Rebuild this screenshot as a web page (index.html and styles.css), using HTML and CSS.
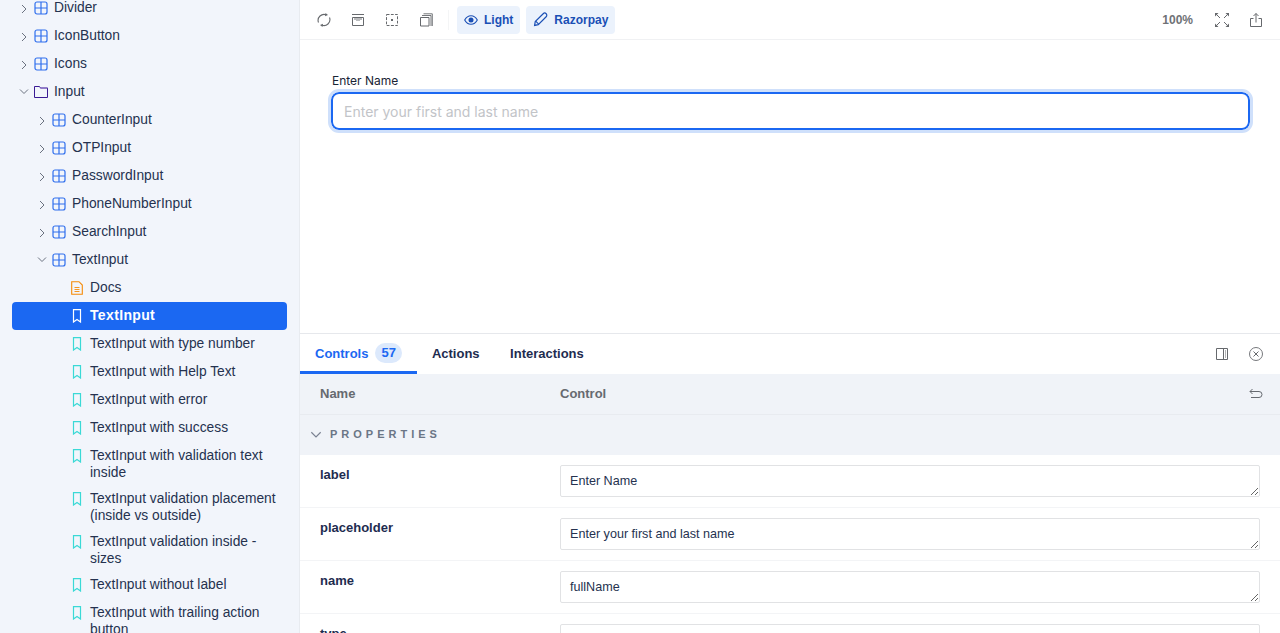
FILE: index.html
```html
<!DOCTYPE html>
<html lang="en">
<head>
    <meta charset="UTF-8">
    <meta name="viewport" content="width=device-width, initial-scale=1.0">
    <title>TextInput - Storybook</title>
    <link rel="stylesheet" href="styles.css">
</head>
<body>
<svg class="defs" width="0" height="0" aria-hidden="true">
    <symbol id="i-component" viewBox="0 0 14 14"><rect x="1" y="1" width="12" height="12" rx="2" fill="none" stroke="currentColor" stroke-width="1.2"/><path d="M7 1v12M1 7h12" stroke="currentColor" stroke-width="1.2"/></symbol>
    <symbol id="i-right" viewBox="0 0 10 10"><path d="M3 1l4 4-4 4" fill="none" stroke="currentColor" stroke-width="1"/></symbol>
    <symbol id="i-down" viewBox="0 0 12 12"><path d="M2 4.500l4 4 4-4" fill="none" stroke="currentColor" stroke-width="1"/></symbol>
    <symbol id="i-story" viewBox="0 0 10 14"><path d="M1.500 .7h7v12.300l-3.500-2.500-3.500 2.500z" fill="none" stroke="currentColor" stroke-width="1.200"/></symbol>
</svg>

<aside class="sidebar">
    <ul class="tree">
        <li class="row"><svg class="arrow"><use href="#i-right"/></svg><svg class="ico comp"><use href="#i-component"/></svg>Divider</li>
        <li class="row"><svg class="arrow"><use href="#i-right"/></svg><svg class="ico comp"><use href="#i-component"/></svg>IconButton</li>
        <li class="row"><svg class="arrow"><use href="#i-right"/></svg><svg class="ico comp"><use href="#i-component"/></svg>Icons</li>
        <li class="row"><svg class="arrow arrow-open"><use href="#i-down"/></svg><svg class="ico folder" viewBox="0 0 14 12"><path d="M.5 .5h5l1 1.500h7v9.500h-13z" fill="none" stroke="#3a1a94" stroke-width="1"/><path d="M6 2h7.500" stroke="#8a70c8" stroke-width="1"/></svg>Input</li>
        <li class="row lvl2"><svg class="arrow"><use href="#i-right"/></svg><svg class="ico comp"><use href="#i-component"/></svg>CounterInput</li>
        <li class="row lvl2"><svg class="arrow"><use href="#i-right"/></svg><svg class="ico comp"><use href="#i-component"/></svg>OTPInput</li>
        <li class="row lvl2"><svg class="arrow"><use href="#i-right"/></svg><svg class="ico comp"><use href="#i-component"/></svg>PasswordInput</li>
        <li class="row lvl2"><svg class="arrow"><use href="#i-right"/></svg><svg class="ico comp"><use href="#i-component"/></svg>PhoneNumberInput</li>
        <li class="row lvl2"><svg class="arrow"><use href="#i-right"/></svg><svg class="ico comp"><use href="#i-component"/></svg>SearchInput</li>
        <li class="row lvl2"><svg class="arrow arrow-open"><use href="#i-down"/></svg><svg class="ico comp"><use href="#i-component"/></svg>TextInput</li>
        <li class="row lvl3"><svg class="ico doc" viewBox="0 0 12 14"><path d="M.7.7h7.300l3.300 3.300v9.300h-10.600z" fill="none" stroke="currentColor" stroke-width="1.100"/><path d="M3.500 6.500h5M3.500 8.500h5M3.500 10.500h5" stroke="currentColor" stroke-width=".9"/></svg>Docs</li>
        <li class="row lvl3 selected"><svg class="ico story"><use href="#i-story"/></svg>TextInput</li>
        <li class="row lvl3"><svg class="ico story"><use href="#i-story"/></svg><span>TextInput with type number</span></li>
        <li class="row lvl3"><svg class="ico story"><use href="#i-story"/></svg><span>TextInput with Help Text</span></li>
        <li class="row lvl3"><svg class="ico story"><use href="#i-story"/></svg><span>TextInput with error</span></li>
        <li class="row lvl3"><svg class="ico story"><use href="#i-story"/></svg><span>TextInput with success</span></li>
        <li class="row lvl3"><svg class="ico story"><use href="#i-story"/></svg><span>TextInput with validation text inside</span></li>
        <li class="row lvl3"><svg class="ico story"><use href="#i-story"/></svg><span>TextInput validation placement (inside vs outside)</span></li>
        <li class="row lvl3"><svg class="ico story"><use href="#i-story"/></svg><span>TextInput validation inside - sizes</span></li>
        <li class="row lvl3"><svg class="ico story"><use href="#i-story"/></svg><span>TextInput without label</span></li>
        <li class="row lvl3"><svg class="ico story"><use href="#i-story"/></svg><span>TextInput with trailing action button</span></li>
    </ul>
</aside>

<main class="content">
    <div class="toolbar">
        <button class="tool"><svg viewBox="0 0 14 14"><path d="M1.500 9.500a6 6 0 0 1 1.500-6.500 6 6 0 0 1 6-1.300M12.500 4.500a6 6 0 0 1-1.500 6.500 6 6 0 0 1-6 1.300" fill="none" stroke="currentColor" stroke-width="1.100"/><path d="M8.500 0l2.500 2-3 1.200zM5.500 14l-2.500-2 3-1.200z" fill="currentColor"/></svg></button>
        <button class="tool"><svg viewBox="0 0 14 14"><path d="M1 1.500h12" stroke="currentColor"/><path d="M1.500 4.500h11v8h-11z" fill="none" stroke="currentColor"/><path d="M4 5v2M6 5v3M8 5v3M10 5v2" stroke="currentColor" stroke-width=".9"/></svg></button>
        <button class="tool"><svg viewBox="0 0 14 14"><path d="M1.500 1.500h11v11h-11z" fill="none" stroke="currentColor" stroke-dasharray="3 1.400 2.800 1.400 2.800 1.400"/><rect x="6" y="6" width="2" height="2" fill="currentColor"/></svg></button>
        <button class="tool"><svg viewBox="0 0 14 14"><path d="M1.500 4.500h8.500v8.500h-8.500z" fill="none" stroke="currentColor"/><path d="M3 2.500h9v10.500M4.500 .8h8.800v12.200" fill="none" stroke="currentColor" stroke-width=".9"/></svg></button>
        <span class="sep"></span>
        <button class="pill"><svg viewBox="0 0 14 14"><path d="M.7 7c1.600-3 3.800-4.300 6.300-4.300s4.700 1.300 6.300 4.300c-1.600 3-3.800 4.300-6.300 4.300s-4.700-1.300-6.300-4.300z" fill="none" stroke="currentColor" stroke-width="1.100"/><circle cx="7" cy="7" r="2.500" fill="currentColor"/></svg>Light</button>
        <button class="pill pill-brand"><svg viewBox="0 0 14 14"><path d="M1.500 12.500l.6-3.500 7.400-7.400a1.500 1.500 0 0 1 2.800 2.800l-7.400 7.400z" fill="none" stroke="currentColor" stroke-width="1.100"/><path d="M2.500 8.500l3 3" stroke="currentColor"/></svg>Razorpay</button>
        <span class="zoom">100%</span>
        <button class="tool"><svg viewBox="0 0 14 14"><path d="M1.500 1.500l3.500 3.500M12.500 1.500l-3.500 3.500M1.500 12.500l3.500-3.500M12.500 12.500l-3.500-3.500" stroke="currentColor"/><path d="M0 0h3.500l-3.500 3.500zM14 0h-3.500l3.500 3.500zM0 14h3.500l-3.500-3.500zM14 14h-3.500l3.500-3.500z" fill="currentColor"/></svg></button>
        <button class="tool"><svg viewBox="0 0 14 14"><path d="M4.500 5.500h-3v8h11v-8h-3" fill="none" stroke="currentColor"/><path d="M7 9.500v-9M4.500 3l2.500-2.500 2.500 2.500" fill="none" stroke="currentColor"/></svg></button>
    </div>

    <section class="preview">
        <label class="field-label" for="full-name">Enter Name</label>
        <input class="field-input" id="full-name" placeholder="Enter your first and last name">
    </section>

    <section class="panel">
        <div class="tabs">
            <a class="tab active">Controls <b class="count">57</b></a>
            <a class="tab">Actions</a>
            <a class="tab">Interactions</a>
            <span class="tabs-right">
                <button class="tool"><svg viewBox="0 0 14 14"><path d="M1.500 1.500h11v11h-11zM8.500 1.500v11" fill="none" stroke="currentColor"/><path d="M10.500 3.500v7" stroke="currentColor" stroke-dasharray="1 1"/></svg></button>
                <button class="tool"><svg viewBox="0 0 14 14"><circle cx="7" cy="7" r="6.500" fill="none" stroke="currentColor" stroke-width=".9"/><path d="M4.500 4.500l5 5M9.500 4.500l-5 5" stroke="currentColor"/></svg></button>
            </span>
        </div>
        <div class="table-head">
            <span class="col-name">Name</span>
            <span class="col-control">Control</span>
            <svg class="undo" viewBox="0 0 14 14"><path d="M3.500 3l-2.500 2.500 2.500 2.500M1 5.500h9a3 3 0 0 1 0 6h-8" fill="none" stroke="currentColor"/></svg>
        </div>
        <div class="section-row"><svg class="section-arrow"><use href="#i-down"/></svg>PROPERTIES</div>
        <div class="prop">
            <span class="prop-name">label</span>
            <textarea class="prop-input" rows="1">Enter Name</textarea>
        </div>
        <div class="prop">
            <span class="prop-name">placeholder</span>
            <textarea class="prop-input" rows="1">Enter your first and last name</textarea>
        </div>
        <div class="prop">
            <span class="prop-name">name</span>
            <textarea class="prop-input" rows="1">fullName</textarea>
        </div>
        <div class="prop">
            <span class="prop-name">type</span>
            <textarea class="prop-input" rows="1"></textarea>
        </div>
    </section>
</main>
</body>
</html>
```
FILE: styles.css
```css
* {
    box-sizing: border-box;
}

html, body {
    height: 100%;
}

body {
    margin: 0;
    display: flex;
    overflow: hidden;
    font-family: "Liberation Sans", Arial, sans-serif;
    color: #1e2c4f;
    background-color: #fff;
}

.defs {
    position: absolute;
}

/* Sidebar */
.sidebar {
    width: 300px;
    flex: none;
    overflow: hidden;
    background-color: #f2f5fb;
    border-right: 1px solid #e8ebf0;
}

.tree {
    list-style: none;
    margin: -6px 0 0;
    padding: 0 12px;
}

.row {
    display: flex;
    align-items: flex-start;
    min-height: 28px;
    padding: 4.5px 8px;
    font-size: 13.8px;
    line-height: 17px;
    color: #25324f;
}

.row svg {
    flex: none;
}

.arrow {
    width: 10px;
    height: 10px;
    margin: 5px 5px 0 -1px;
    color: #6b7280;
}

.arrow-open {
    width: 12px;
    height: 12px;
    margin: 2.5px 4px 0 -2px;
}

.ico {
    width: 14px;
    height: 14px;
    margin: 2.5px 6px 0 0;
}

.comp {
    color: #2f6fed;
}

.doc {
    width: 12px;
    color: #f58a07;
    margin-left: 1px;
    margin-right: 7px;
}

.story {
    width: 10px;
    color: #3ad9d6;
    margin: 2.5px 8px 0 2px;
}

.lvl2 {
    padding-left: 26px;
}

.lvl3 {
    padding-left: 58px;
}

.selected {
    background-color: #1b68f2;
    border-radius: 4px;
    color: #fff;
    font-size: 14px;
    font-weight: 700;
    letter-spacing: .35px;
}

.selected .story {
    color: #fff;
}

/* Main area */
.content {
    flex: 1;
    min-width: 0;
    display: flex;
    flex-direction: column;
    height: 633px;
    overflow: hidden;
}

.toolbar {
    height: 40px;
    flex: none;
    display: flex;
    align-items: center;
    padding-left: 7px;
    padding-right: 7px;
    border-bottom: 1px solid #f0f1f3;
}

.tool {
    width: 34px;
    height: 28px;
    padding: 0;
    border: none;
    background: none;
    color: #66696d;
    display: flex;
    align-items: center;
    justify-content: center;
}

.tool svg {
    width: 14px;
    height: 14px;
}

.sep {
    width: 1px;
    height: 20px;
    margin: 0 8px 0 5px;
    background-color: #f4f5f6;
}

.pill {
    height: 28px;
    margin-right: 6px;
    padding: 0 7px;
    display: flex;
    align-items: center;
    gap: 6px;
    border: none;
    border-radius: 4px;
    background-color: #ebf2fc;
    color: #1a4fb5;
    font-family: "Liberation Sans", Arial, sans-serif;
    font-size: 12px;
    font-weight: 700;
}

.pill svg {
    width: 14px;
    height: 14px;
}

.pill-brand svg {
    width: 15px;
    height: 15px;
}

.zoom {
    margin-left: auto;
    margin-right: 12px;
    font-size: 12px;
    font-weight: 700;
    color: #6f7276;
}

/* Preview */
.preview {
    height: 294px;
    flex: none;
    padding: 32px 30px 0 32px;
    border-bottom: 1px solid #e6e8ec;
}

.field-label {
    display: block;
    height: 20px;
    font-family: Inter, sans-serif;
    font-size: 12px;
    line-height: 18px;
    color: #192436;
}

.field-input {
    display: block;
    width: 919px;
    height: 38px;
    margin-left: -1px;
    padding: 0 11px;
    border: 2px solid #1b68f2;
    border-radius: 8px;
    outline: 3px solid #cfe0fb;
    font-family: Inter, sans-serif;
    font-size: 14px;
}

.field-input::placeholder {
    color: #c2c4c8;
}

/* Addon panel */
.panel {
    flex: 1;
    min-height: 0;
    overflow: hidden;
}

.tabs {
    height: 40px;
    display: flex;
    font-size: 13px;
    font-weight: 700;
}

.tab {
    display: flex;
    align-items: center;
    gap: 7px;
    padding: 0 15.5px 1px 15px;
    color: #1e2c4f;
}

.tab.active {
    color: #1b68f2;
    border-bottom: 3px solid #1b68f2;
    padding: 1px 15px 0;
}

.count {
    height: 20px;
    padding: 0 6px;
    border-radius: 10px;
    background-color: #dce9fc;
    font-size: 13px;
    line-height: 20px;
}

.tabs-right {
    margin-left: auto;
    display: flex;
    align-items: center;
    padding-right: 7px;
}

.table-head {
    height: 41px;
    display: flex;
    align-items: center;
    padding: 0 17px 2px 20px;
    background-color: #f0f3f8;
    border-bottom: 1px solid #e8ebf0;
    font-size: 13px;
    font-weight: 700;
    color: #666a70;
}

.col-name {
    width: 240px;
}

.undo {
    width: 14px;
    height: 14px;
    margin-left: auto;
}

.section-row {
    height: 40px;
    display: flex;
    align-items: center;
    padding-left: 9px;
    padding-bottom: 2px;
    background-color: #f0f3f8;
    font-size: 11px;
    font-weight: 700;
    letter-spacing: 4px;
    color: #6b7686;
}

.section-arrow {
    width: 14px;
    height: 14px;
    margin-right: 7px;
    color: #7a8292;
}

.prop {
    height: 53px;
    display: flex;
    padding: 10px 20px;
    border-bottom: 1px solid #f3f4f6;
}

.prop-name {
    width: 240px;
    flex: none;
    font-size: 13px;
    font-weight: 700;
    line-height: 20px;
    color: #1e2c4f;
}

.prop-input {
    flex: 1;
    height: 32px;
    padding: 6px 9px;
    border: 1px solid #e1e2e4;
    border-radius: 2px;
    resize: vertical;
    font-family: "Liberation Sans", Arial, sans-serif;
    font-size: 12.6px;
    line-height: 18px;
    color: #25324f;
}
```
